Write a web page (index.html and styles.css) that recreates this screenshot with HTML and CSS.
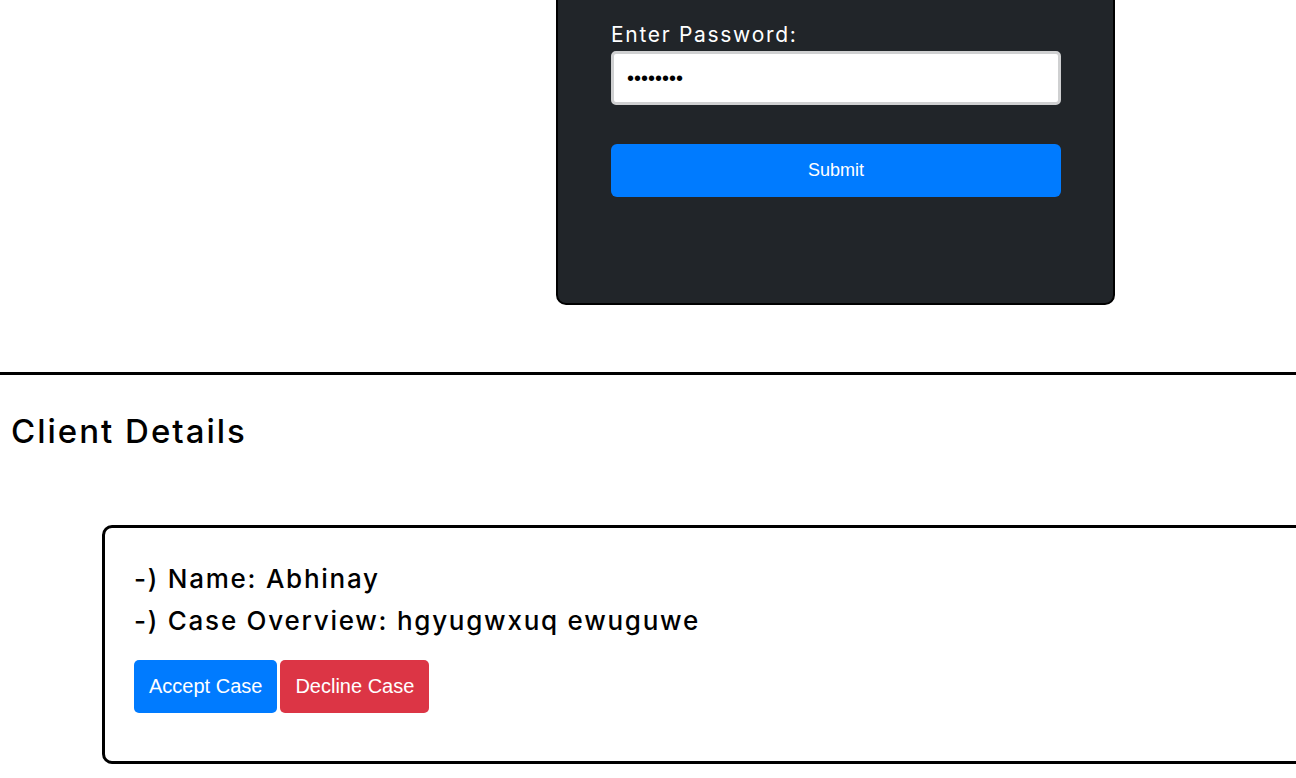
FILE: index.html
```html
<!DOCTYPE html>
<html lang="en">
<head>
<meta charset="utf-8">
<title>Lawyer Dashboard</title>
<link rel="stylesheet" href="styles.css">
</head>
<body>
<div class="login-row">
  <form class="login-card">
    <label class="field-label" for="pw">Enter Password:</label>
    <input class="field-input" id="pw" type="password" value="abcdefgh">
    <button class="submit-btn" type="button">Submit</button>
  </form>
</div>
<section class="clients">
  <h2 class="clients-title">Client Details</h2>
  <div class="client-card">
    <p class="client-line">-) Name: Abhinay</p>
    <p class="client-line">-) Case Overview: hgyugwxuq ewuguwe</p>
    <div class="actions">
      <button class="btn btn-accept" type="button">Accept Case</button>
      <button class="btn btn-decline" type="button">Decline Case</button>
    </div>
  </div>
</section>
</body>
</html>
```
FILE: styles.css
```css
html, body {
  margin: 0;
  padding: 0;
  overflow: hidden;
  background: #fff;
}
body {
  font-family: "Inter", "Noto Sans", sans-serif;
  color: #000;
}
.login-row {
  display: flex;
  padding-left: 556px;
}
.login-card {
  box-sizing: border-box;
  width: 559px;
  margin-top: -32px;
  padding: 50px 52px 106px 53px;
  background: #212529;
  border: 2px solid #000;
  border-radius: 10px;
  display: flex;
  flex-direction: column;
}
.field-label {
  color: #fff;
  font-size: 21px;
  letter-spacing: 1.7px;
  line-height: 30px;
  margin-bottom: 1px;
}
.field-input {
  box-sizing: border-box;
  width: 100%;
  height: 54px;
  border: 3px solid #cfd0d1;
  border-radius: 5px;
  padding: 0 13px;
  font-size: 20px;
  background: #fff;
  color: #000;
}
.submit-btn {
  margin-top: 39px;
  height: 53px;
  border: none;
  border-radius: 6px;
  background: #007bff;
  color: #fff;
  font-family: "Liberation Sans", Arial, sans-serif;
  font-size: 18px;
}
.clients {
  margin-top: 67px;
  border-top: 3px solid #000;
}
.clients-title {
  margin: 0;
  padding: 32px 0 0 11px;
  font-size: 33px;
  font-weight: 500;
  letter-spacing: 2px;
  line-height: 48px;
}
.client-card {
  box-sizing: border-box;
  width: 1260px;
  margin: 70px 0 0 102px;
  padding: 30px 29px 48px;
  border: 3px solid #000;
  border-radius: 10px;
}
.client-line {
  margin: 0;
  font-size: 26px;
  font-weight: 500;
  letter-spacing: 1.75px;
  line-height: 42px;
}
.actions {
  display: flex;
  gap: 3px;
  margin-top: 18px;
}
.btn {
  height: 53px;
  padding: 0 15px;
  border: none;
  border-radius: 5px;
  color: #fff;
  font-family: "Liberation Sans", Arial, sans-serif;
  font-size: 20px;
}
.btn-accept { background: #007bff; }
.btn-decline { background: #dc3545; }
```
